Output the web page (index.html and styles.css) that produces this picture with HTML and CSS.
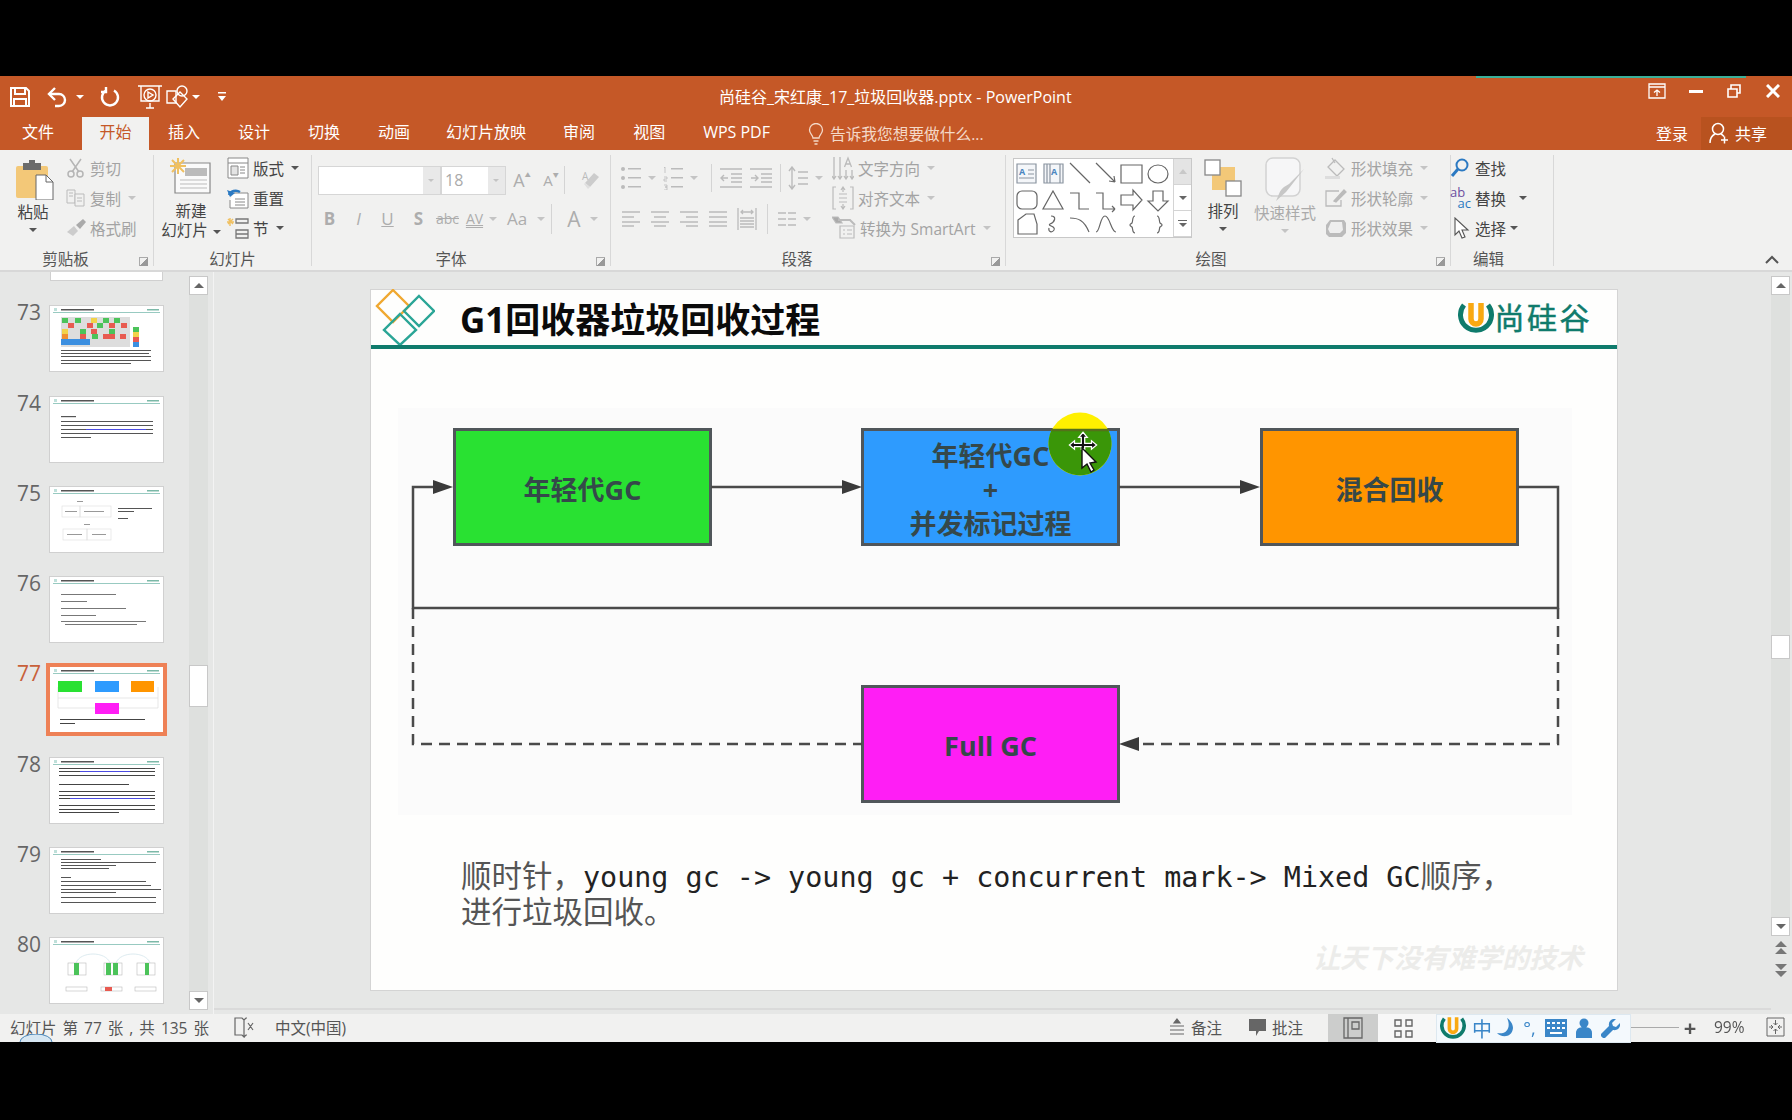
FILE: index.html
```html
<!DOCTYPE html>
<html>
<head>
    <title>尚硅谷_宋红康_17_垃圾回收器.pptx - PowerPoint</title>
    <link rel="stylesheet" href="styles.css">
</head>
<body>
<div class="app">
    <div class="upload-bar"></div>

    <!-- title bar -->
    <div class="titlebar">
        <div class="qat">
            <svg class="q-save" width="22" height="22" viewBox="0 0 22 22" fill="none" stroke="#fff" stroke-width="2"><path d="M2 2h15l3 3v15H2z"/><path d="M6 2v6h10V2M5 20v-7h12v7"/></svg>
            <svg class="q-undo" width="24" height="22" viewBox="0 0 24 22" fill="none" stroke="#fff" stroke-width="2.4"><path d="M3 8h10a6 6 0 0 1 0 12H9"/><path d="M9 2L3 8l6 6"/></svg>
            <span class="caret white"></span>
            <svg class="q-redo" width="22" height="22" viewBox="0 0 22 22" fill="none" stroke="#fff" stroke-width="2.4"><path d="M7 4.500a8 8 0 1 0 8 0"/><path d="M7 1v5H2"/></svg>
            <svg class="q-show" width="26" height="28" viewBox="0 0 26 28" fill="none" stroke="#fff" stroke-width="1.400"><path d="M1 3h24M4 3v15h18V3M9 25h8M13 20v5"/><circle cx="13" cy="12" r="6"/><path d="M11 9l5 3-5 3z"/></svg>
            <svg class="q-shape" width="26" height="26" viewBox="0 0 26 26" fill="none" stroke="#fff" stroke-width="1.400"><path d="M2 7h9v12H2z"/><circle cx="17" cy="7" r="5"/><path d="M15 8l7 7-7 8-7-8z"/></svg>
            <span class="caret white near"></span>
            <svg class="q-more" width="10" height="12" viewBox="0 0 10 12" fill="#fff"><path d="M1 1h8v1.500H1zM1 5h8L5 10z"/></svg>
        </div>
        <div class="doc-title">尚硅谷_宋红康_17_垃圾回收器.pptx - PowerPoint</div>
        <div class="win-btns">
            <span class="win-btn"><svg width="18" height="16" viewBox="0 0 18 16" fill="none" stroke="#fff" stroke-width="1.300"><path d="M1 1h16v14H1zM1 4h16"/><path d="M9 13V7M6 9.500L9 7l3 2.500" /></svg></span>
            <span class="win-btn"><svg width="14" height="4" viewBox="0 0 14 4"><rect width="14" height="3" y="1" fill="#fff"/></svg></span>
            <span class="win-btn"><svg width="14" height="14" viewBox="0 0 14 14" fill="none" stroke="#fff" stroke-width="1.600"><path d="M1 5h9v8H1zM4 5V1h9v8h-3"/></svg></span>
            <span class="win-btn"><svg width="14" height="14" viewBox="0 0 14 14" fill="none" stroke="#fff" stroke-width="3"><path d="M1 1l12 12M13 1L1 13"/></svg></span>
        </div>
    </div>

    <!-- ribbon tabs -->
    <div class="tabs">
        <span class="tab tab-file">文件</span>
        <span class="tab active">开始</span>
        <span class="tab">插入</span>
        <span class="tab">设计</span>
        <span class="tab">切换</span>
        <span class="tab">动画</span>
        <span class="tab tab-show">幻灯片放映</span>
        <span class="tab">审阅</span>
        <span class="tab">视图</span>
        <span class="tab tab-wps">WPS PDF</span>
        <span class="tell-me">
            <svg width="16" height="22" viewBox="0 0 16 22" fill="none" stroke="#f4d9c8" stroke-width="1.300"><path d="M5 15c0-3-3.500-4-3.500-8a6.500 6.500 0 0 1 13 0c0 4-3.500 5-3.500 8zM5.500 18h5M6.500 21h3"/></svg>
            告诉我您想要做什么...
        </span>
        <span class="login">登录</span>
        <span class="share">
            <svg width="20" height="22" viewBox="0 0 20 22" fill="none" stroke="#fff" stroke-width="1.500"><circle cx="9" cy="7" r="5.500"/><path d="M1 21c0-5 3-8 5-9M12 12c1 .5 2 1.200 3 2.500M12 18h7M15.500 14.500v7"/></svg>
            共享
        </span>
    </div>

    <!-- ribbon -->
    <div class="ribbon">
        <div class="group g-clip">
            <div class="group-body">
                <div class="big-btn paste">
                    <svg width="38" height="40" viewBox="0 0 38 40"><rect x="0" y="6" width="32" height="32" rx="2" fill="#F3C878"/><rect x="7" y="3" width="18" height="7" fill="#6b6b6b"/><rect x="13" y="0" width="6" height="5" fill="#6b6b6b"/><path d="M20 15h10l7 7v18H20z" fill="#fff" stroke="#666"/><path d="M30 15v7h7" fill="none" stroke="#666"/></svg>
                    <span class="big-label">粘贴</span>
                    <span class="caret"></span>
                </div>
                <div class="rows">
                    <div class="row dim">
                        <svg class="ico" width="20" height="20" viewBox="0 0 20 20" fill="none" stroke="#b5b5b5" stroke-width="1.500"><circle cx="5" cy="16" r="3"/><circle cx="14" cy="16" r="3"/><path d="M6 14L15 1M13 14L4 1"/></svg>
                        剪切
                    </div>
                    <div class="row dim">
                        <svg class="ico" width="20" height="20" viewBox="0 0 20 20" fill="none" stroke="#bbb"><path d="M1 2h8v13H1zM3 5h4M3 8h4"/><path d="M9 6h9v12H9zM11 10h5M11 13h5" fill="#f1f1f0"/></svg>
                        复制<span class="caret pale spaced"></span>
                    </div>
                    <div class="row dim">
                        <svg class="ico" width="20" height="18" viewBox="0 0 20 18"><path d="M1 13l7-6 4 5-5 5z" fill="#ccc"/><path d="M10 6l7-6 3 3-6 7z" fill="#aaa"/></svg>
                        格式刷
                    </div>
                </div>
            </div>
            <div class="group-label">剪贴板</div>
            <span class="launcher"></span>
        </div>

        <div class="group g-slide">
            <div class="group-body">
                <div class="big-btn new-slide">
                    <svg width="42" height="36" viewBox="0 0 42 36"><path d="M5 5h35v30H5z" fill="#fafafa" stroke="#888" stroke-width="1.200"/><rect x="15" y="10" width="22" height="8" fill="#bbb"/><path d="M10 22h27M10 26h27M10 30h27" stroke="#bbb"/><path d="M8 0v16M0 8h16M2 2l12 12M14 2L2 14" stroke="#F0C060" stroke-width="2"/></svg>
                    <span class="big-label">新建</span>
                    <span class="big-label tight">幻灯片<span class="caret spaced"></span></span>
                </div>
                <div class="rows">
                    <div class="row">
                        <svg class="ico" width="22" height="22" viewBox="0 0 22 22" fill="#fff" stroke="#888"><path d="M1 1h20v20H1z"/><path d="M1 6h20M4 9h7v9H4z" fill="#e4e4e4"/><path d="M13 10h5M13 13h5M13 16h5"/></svg>
                        版式<span class="caret spaced"></span>
                    </div>
                    <div class="row">
                        <svg class="ico" width="22" height="22" viewBox="0 0 22 22" fill="none" stroke="#888"><path d="M7 6h14v15H3v-8" fill="#fff"/><path d="M8 12h10M8 15h10M8 18h10"/><path d="M2 8a7 6 0 0 1 11-3" stroke="#2B79C2" stroke-width="2.400"/><path d="M0 3l3 7 5-4z" fill="#2B79C2" stroke="none"/></svg>
                        重置
                    </div>
                    <div class="row">
                        <svg class="ico" width="22" height="22" viewBox="0 0 22 22" fill="none"><path d="M9 2h12v4H9zM9 13h12v8H9zM9 17h12" stroke="#777" stroke-width="1.300"/><path d="M3 1v8M0 5h7M1 2l5 5M6 2L1 7" stroke="#F0C060" stroke-width="1.400"/></svg>
                        节<span class="caret spaced"></span>
                    </div>
                </div>
            </div>
            <div class="group-label">幻灯片</div>
        </div>

        <div class="group g-font">
            <div class="group-body column">
                <div class="font-row1">
                    <div class="combo name"><span class="combo-arrow"></span></div>
                    <div class="combo size"><span class="combo-val">18</span><span class="combo-arrow"></span></div>
                    <span class="cell w32 glyph">A<sup class="mini">▲</sup></span>
                    <span class="cell w22 glyph small shift-a">A<sup class="mini">▼</sup></span>
                    <span class="vsep"></span>
                    <span class="cell w40 eraser">
                        <svg width="20" height="22" viewBox="0 0 20 22"><path d="M9 18l9-10-5-4-9 10z" fill="#ccc"/><path d="M3 15l4 5 2-2-5-4z" fill="#e0e0e0"/><text x="1" y="11" font-size="10" fill="#bbb" font-family="Open Sans">A</text></svg>
                    </span>
                </div>
                <div class="font-row2">
                    <span class="cell w29 glyph b">B</span>
                    <span class="cell w29 glyph i">I</span>
                    <span class="cell w29 glyph u">U</span>
                    <span class="cell w29 glyph s">S</span>
                    <span class="cell w29 glyph st">abc</span>
                    <span class="cell w29 glyph av">AV</span>
                    <span class="caret pale"></span>
                    <span class="cell w40 glyph aa">Aa</span>
                    <span class="caret pale"></span>
                    <span class="vsep short"></span>
                    <span class="cell w32 glyph big">A</span>
                    <span class="caret pale"></span>
                </div>
            </div>
            <div class="group-label">字体</div>
            <span class="launcher"></span>
        </div>

        <div class="group g-para">
            <div class="group-body">
                <div class="para-left">
                    <div class="para-row1">
                        <span class="cell w40"><svg width="20" height="24" viewBox="0 0 20 24" fill="#bbb"><circle cx="2" cy="3" r="2"/><circle cx="2" cy="12" r="2"/><circle cx="2" cy="21" r="2"/><path d="M7 2h13v1.500H7zM7 11h13v1.500H7zM7 20h13v1.500H7z"/></svg><span class="caret pale spaced"></span></span>
                        <span class="cell w45"><svg width="20" height="24" viewBox="0 0 20 24" fill="#bbb"><path d="M8 2h12v1.500H8zM8 11h12v1.500H8zM8 20h12v1.500H8z"/><path d="M2 1v6M1 2l1-1M1 11h3v2H1v2h3M1 19h3v2H2h2v3H1"  fill="none" stroke="#bbb" stroke-width=".8"/></svg><span class="caret pale spaced"></span></span>
                        <span class="vsep tall first"></span>
                        <span class="cell w30"><svg width="22" height="22" viewBox="0 0 22 22" fill="none" stroke="#bbb" stroke-width="1.400"><path d="M0 2h22M11 7h11M11 11h11M11 15h11M0 20h22M8 11H1M4 8l-3 3 3 3" /></svg></span>
                        <span class="cell w30"><svg width="22" height="22" viewBox="0 0 22 22" fill="none" stroke="#bbb" stroke-width="1.400"><path d="M0 2h22M11 7h11M11 11h11M11 15h11M0 20h22M1 11h7M5 8l3 3-3 3" /></svg></span>
                        <span class="vsep tall"></span>
                        <span class="cell w40"><svg width="20" height="24" viewBox="0 0 20 24" fill="none" stroke="#bbb" stroke-width="1.400"><path d="M4 1v22M1 5l3-4 3 4M1 19l3 4 3-4M10 6h10M10 12h10M10 18h10"/></svg><span class="caret pale spaced"></span></span>
                    </div>
                    <div class="para-row2">
                        <span class="cell w29"><svg width="18" height="16" viewBox="0 0 18 16" stroke="#bbb" stroke-width="1.400"><path d="M0 1h18M0 6h12M0 11h18M0 15h12"/></svg></span>
                        <span class="cell w29"><svg width="18" height="16" viewBox="0 0 18 16" stroke="#bbb" stroke-width="1.400"><path d="M0 1h18M3 6h12M0 11h18M3 15h12"/></svg></span>
                        <span class="cell w29"><svg width="18" height="16" viewBox="0 0 18 16" stroke="#bbb" stroke-width="1.400"><path d="M0 1h18M6 6h12M0 11h18M6 15h12"/></svg></span>
                        <span class="cell w29"><svg width="18" height="16" viewBox="0 0 18 16" stroke="#bbb" stroke-width="1.400"><path d="M0 1h18M0 6h18M0 11h18M0 15h18"/></svg></span>
                        <span class="cell w29"><svg width="20" height="24" viewBox="0 0 20 24" fill="none" stroke="#bbb" stroke-width="1.300"><path d="M1 1v22M19 1v22M4 5h12M6 3L4 5l2 2M14 3l2 2-2 2M3 11h14M3 14h14M3 17h14M3 20h14"/></svg></span>
                        <span class="vsep short"></span>
                        <span class="cell w40"><svg width="18" height="16" viewBox="0 0 18 16" stroke="#bbb" stroke-width="1.400"><path d="M0 2h8M10 2h8M0 8h8M10 8h8M0 14h8M10 14h8"/></svg><span class="caret pale spaced"></span></span>
                    </div>
                </div>
                <div class="rows para-right">
                    <div class="row dim">
                        <svg class="ico" width="22" height="24" viewBox="0 0 22 24" fill="none" stroke="#bbb" stroke-width="1.300"><path d="M2 1v22M8 1v22M0 20l2 3 2-3M6 20l2 3 2-3M14 14v9M12 20l2 3 2-3M20 14v9M18 20l2 3 2-3"/><path d="M12.500 11l3.500-9 3.500 9M14 8h4"/></svg>
                        文字方向<span class="caret pale spaced"></span>
                    </div>
                    <div class="row dim">
                        <svg class="ico" width="22" height="24" viewBox="0 0 22 24" fill="none" stroke="#bbb" stroke-width="1.200"><path d="M4 1H1v22h3M18 1h3v22h-3M7 8h8M7 12h8M7 16h8M11 1v5M9 4l2-3 2 3M11 18v5M9 20l2 3 2-3"/></svg>
                        对齐文本<span class="caret pale spaced"></span>
                    </div>
                    <div class="row dim">
                        <svg class="ico" width="24" height="24" viewBox="0 0 24 24" fill="none" stroke="#bbb" stroke-width="1.200"><path d="M0 1h6l4 6H4z" fill="#aaa"/><path d="M6 4h12l5 5" stroke-width="2"/><path d="M8 10h14v12H8zM11 14h2M15 14h5M11 18h2M15 18h5"/></svg>
                        转换为 SmartArt<span class="caret pale spaced"></span>
                    </div>
                </div>
            </div>
            <div class="group-label">段落</div>
            <span class="launcher"></span>
        </div>

        <div class="group g-draw">
            <div class="group-body">
                <div class="gallery">
                    <svg class="gallery-shapes" width="160" height="80" viewBox="0 0 160 80" fill="none" stroke="#666" stroke-width="1.200">
                        <path d="M4 6h19v19H4zM15 12h6M15 16h6M6 20h15" stroke="#8a94a0" fill="#f4f6f9"/><text x="6" y="17" font-size="9" fill="#4a86c0" stroke="none" font-family="Open Sans" font-weight="700">A</text>
                        <path d="M31 6h19v19H31zM34 6v19M37 6v19M47 6v19" stroke="#8a94a0" fill="#f4f6f9"/><text x="38" y="17" font-size="9" fill="#4a86c0" stroke="none" font-family="Open Sans" font-weight="700">A</text>
                        <path d="M57 5l20 20M83 5l19 19M102 24l-6-1M102 24l-1-6"/>
                        <path d="M108 7h21v18h-21z"/><ellipse cx="145" cy="16" rx="10" ry="9"/>
                        <rect x="4" y="33" width="20" height="18" rx="5"/><path d="M40 33l10 18H30zM57 35h9v16h10M83 35h7v16h12M102 51l-3-3M102 51l-3 3M108 37h12v-5l9 10-9 10v-5h-12zM140 33h10v10h5l-10 10-10-10h5z"/>
                        <path d="M5 62l8-6h8l3 10v10H5zM38 58c6 0 4 6-1 8-3 2 6 2 4 6-2 3-6 2-5-2M57 60c8 0 14 2 19 14M83 74c4 0 4-16 9-16s6 16 11 16"/>
                        <path d="M122 58c-3 0-2 6-3 7-1 1-2 1-2 2s1 1 2 2c1 1 0 6 3 6M144 58c3 0 2 6 3 7 1 1 2 1 2 2s-1 1-2 2c-1 1 0 6-3 6"/>
                    </svg>
                    <div class="gallery-scroll">
                        <span class="g-up"><i class="tri up pale"></i></span>
                        <span class="g-mid"><i class="tri"></i></span>
                        <span class="g-more"><i class="bar"></i><i class="tri"></i></span>
                    </div>
                </div>
                <div class="big-btn arrange">
                    <svg width="38" height="38" viewBox="0 0 38 38"><rect x="8" y="8" width="23" height="23" fill="#F3C878"/><rect x="1" y="1" width="15" height="15" fill="#fff" stroke="#888" stroke-width="1.300"/><rect x="22" y="22" width="15" height="15" fill="#fff" stroke="#888" stroke-width="1.300"/></svg>
                    <span class="big-label">排列</span>
                    <span class="caret"></span>
                </div>
                <div class="big-btn quick dim">
                    <svg width="40" height="46" viewBox="0 0 40 46"><rect x="1" y="1" width="34" height="38" rx="7" fill="#f6f6f7" stroke="#d2d2d2" stroke-width="1.500"/><path d="M39 12L25 30l-4 5-10 9c3-6 3-10 8-14l5-3z" fill="#c7c7c7"/></svg>
                    <span class="big-label quick-label">快速样式</span>
                    <span class="caret pale"></span>
                </div>
                <div class="rows shape-rows">
                    <div class="row dim">
                        <svg class="ico" width="22" height="22" viewBox="0 0 22 22" fill="none" stroke="#bbb" stroke-width="1.300"><path d="M10 3l9 9-7 7-9-9zM7 1l3 5"/><path d="M0 19h15v3H0z" fill="#ddd" stroke="none"/></svg>
                        形状填充<span class="caret pale spaced"></span>
                    </div>
                    <div class="row dim">
                        <svg class="ico" width="22" height="20" viewBox="0 0 22 20" fill="none" stroke="#bbb" stroke-width="1.300"><path d="M14 3H1v15h15v-6"/><path d="M9 13l10-11 2 2-10 10z" fill="#bbb"/></svg>
                        形状轮廓<span class="caret pale spaced"></span>
                    </div>
                    <div class="row dim">
                        <svg class="ico" width="22" height="20" viewBox="0 0 22 20"><path d="M5 2h14l2 3v10l-4 4H4l-3-3V7z" fill="#bbb"/><path d="M6 4h11l1 8-3 3H5l-2-4z" fill="#eee"/></svg>
                        形状效果<span class="caret pale spaced"></span>
                    </div>
                </div>
            </div>
            <div class="group-label">绘图</div>
            <span class="launcher"></span>
        </div>

        <div class="group g-edit">
            <div class="group-body">
                <div class="rows">
                    <div class="row">
                        <svg class="ico" width="20" height="20" viewBox="0 0 20 20" fill="none" stroke="#2B79C2"><circle cx="12" cy="7" r="5.500" stroke-width="2"/><path d="M8 11l-6 7" stroke-width="3"/></svg>
                        查找
                    </div>
                    <div class="row">
                        <span class="ab-ac"><b>ab</b><b class="ac">ac</b></span>
                        替换<span class="caret spaced wide"></span>
                    </div>
                    <div class="row">
                        <svg class="ico" width="20" height="22" viewBox="0 0 20 22" fill="#fff" stroke="#555" stroke-width="1.100"><path d="M5 1v17l4-4 3 7 3-1-3-7h6z"/></svg>
                        选择<span class="caret spaced close"></span>
                    </div>
                </div>
            </div>
            <div class="group-label">编辑</div>
        </div>

        <svg class="collapse" width="14" height="9" viewBox="0 0 14 9" fill="none" stroke="#555" stroke-width="2"><path d="M1 8l6-6 6 6"/></svg>
    </div>

    <!-- main area -->
    <div class="main">
        <div class="thumb-pane">
            <div class="thumb-list">
                <div class="thumb-stub"></div>

                <div class="thumb-row">
                    <span class="num">73</span>
                    <svg class="thumb" viewBox="0 0 113 65">
                        <use href="#thumbHead"/>
                        <rect x="11" y="11" width="69" height="30" fill="#ddd"/>
                        <g fill="#4CC35A"><rect x="12" y="12" width="6" height="5"/><rect x="25" y="12" width="6" height="5"/><rect x="53" y="12" width="6" height="5"/><rect x="64" y="12" width="6" height="5"/><rect x="47" y="17" width="6" height="5"/><rect x="30" y="23" width="6" height="5"/><rect x="59" y="23" width="6" height="5"/><rect x="42" y="28" width="6" height="5"/></g>
                        <g fill="#E85A50"><rect x="18" y="17" width="6" height="5"/><rect x="37" y="17" width="6" height="5"/><rect x="59" y="17" width="6" height="5"/><rect x="71" y="17" width="6" height="5"/><rect x="41" y="23" width="6" height="5"/><rect x="30" y="28" width="6" height="5"/><rect x="53" y="28" width="12" height="5"/><rect x="70" y="28" width="6" height="5"/></g>
                        <g fill="#F2D34A"><rect x="12" y="23" width="6" height="5"/><rect x="41" y="12" width="6" height="5"/></g>
                        <rect x="12" y="28" width="6" height="5" fill="#F09030"/>
                        <rect x="11" y="33" width="29" height="6" fill="#3C8FE0"/>
                        <rect x="83" y="21" width="6" height="5" fill="#4CC35A"/><rect x="83" y="26" width="6" height="5" fill="#F2D34A"/><rect x="83" y="31" width="6" height="5" fill="#E85A50"/><rect x="83" y="36" width="6" height="5" fill="#3C8FE0"/>
                        <g fill="#555"><rect x="11" y="44" width="90" height="1"/><rect x="11" y="47" width="88" height="1"/><rect x="11" y="50" width="90" height="1"/><rect x="11" y="54" width="90" height="1"/><rect x="11" y="57" width="70" height="1"/></g>
                    </svg>
                </div>

                <div class="thumb-row">
                    <span class="num">74</span>
                    <svg class="thumb" viewBox="0 0 113 65">
                        <use href="#thumbHead"/>
                        <g fill="#555"><rect x="11" y="19" width="15" height="1.200"/><rect x="11" y="24" width="92" height="1"/><rect x="11" y="28" width="92" height="1"/><rect x="11" y="32" width="92" height="1"/><rect x="11" y="36" width="92" height="1"/><rect x="11" y="40" width="30" height="1"/></g>
                        <rect x="36" y="32" width="60" height="1" fill="#4a4ae0"/>
                    </svg>
                </div>

                <div class="thumb-row">
                    <span class="num">75</span>
                    <svg class="thumb" viewBox="0 0 113 65">
                        <use href="#thumbHead"/>
                        <g fill="none" stroke="#ddd" stroke-width=".6"><rect x="12" y="19" width="18" height="11"/><rect x="30" y="19" width="31" height="11"/><rect x="13" y="42" width="24" height="11"/><rect x="37" y="42" width="24" height="11"/></g>
                        <g fill="#999"><rect x="15" y="24" width="12" height="1"/><rect x="34" y="24" width="20" height="1"/><rect x="17" y="47" width="15" height="1"/><rect x="42" y="47" width="14" height="1"/><rect x="27" y="14" width="6" height="1"/><rect x="34" y="37" width="6" height="1"/></g>
                        <g fill="#555"><rect x="68" y="21" width="34" height="1"/><rect x="68" y="24" width="16" height="1"/><rect x="68" y="31" width="10" height="1"/></g>
                    </svg>
                </div>

                <div class="thumb-row">
                    <span class="num">76</span>
                    <svg class="thumb" viewBox="0 0 113 65">
                        <use href="#thumbHead"/>
                        <g fill="#777"><rect x="11" y="17" width="55" height="1"/><rect x="11" y="24" width="26" height="1"/><rect x="11" y="31" width="65" height="1"/><rect x="11" y="38" width="35" height="1"/><rect x="11" y="44" width="85" height="1"/><rect x="15" y="47" width="72" height="1"/></g>
                    </svg>
                </div>

                <div class="thumb-row">
                    <span class="num current">77</span>
                    <svg class="thumb selected" viewBox="0 0 113 65">
                        <use href="#thumbHead"/>
                        <g fill="none" stroke="#ddd" stroke-width=".7"><path d="M8 20v21h100V20M8 31h100"/></g>
                        <rect x="8" y="14" width="24" height="11" fill="#29E132"/>
                        <rect x="45" y="14" width="24" height="11" fill="#2E9BFE"/>
                        <rect x="81" y="14" width="23" height="11" fill="#FF9500"/>
                        <rect x="45" y="36" width="24" height="11" fill="#FF1EF5"/>
                        <g fill="#444"><rect x="10" y="52" width="85" height="1"/><rect x="10" y="56" width="15" height="1"/></g>
                    </svg>
                </div>

                <div class="thumb-row">
                    <span class="num">78</span>
                    <svg class="thumb" viewBox="0 0 113 65">
                        <use href="#thumbHead"/>
                        <g fill="#444"><rect x="9" y="10" width="96" height="1"/><rect x="9" y="13" width="96" height="1"/><rect x="9" y="17" width="96" height="1"/><rect x="9" y="26" width="70" height="1"/><rect x="9" y="33" width="96" height="1"/><rect x="9" y="37" width="96" height="1"/><rect x="9" y="40" width="96" height="1"/><rect x="9" y="47" width="96" height="1"/><rect x="9" y="51" width="96" height="1"/><rect x="9" y="54" width="60" height="1"/></g>
                        <g fill="#4a4ae0"><rect x="30" y="13" width="50" height="1"/><rect x="20" y="40" width="80" height="1"/></g>
                    </svg>
                </div>

                <div class="thumb-row">
                    <span class="num">79</span>
                    <svg class="thumb" viewBox="0 0 113 65">
                        <use href="#thumbHead"/>
                        <g fill="#555"><rect x="11" y="11" width="40" height="1"/><rect x="11" y="14" width="95" height="1"/><rect x="11" y="17" width="55" height="1"/><rect x="11" y="20" width="48" height="1"/><rect x="11" y="29" width="10" height="1"/><rect x="11" y="33" width="85" height="1"/><rect x="11" y="37" width="90" height="1"/><rect x="11" y="41" width="100" height="1"/><rect x="11" y="44" width="55" height="1"/><rect x="11" y="49" width="95" height="1"/><rect x="11" y="54" width="95" height="1"/></g>
                    </svg>
                </div>

                <div class="thumb-row">
                    <span class="num">80</span>
                    <svg class="thumb" viewBox="0 0 113 65">
                        <use href="#thumbHead"/>
                        <g fill="none" stroke="#cfe3ea" stroke-width=".7"><path d="M26 25c4-12 30-12 34 0M66 25c4-12 30-12 34 0"/></g>
                        <g fill="none" stroke="#bbb" stroke-width=".6"><rect x="18" y="25" width="18" height="12"/><rect x="54" y="25" width="18" height="12"/><rect x="87" y="25" width="18" height="12"/><rect x="16" y="49" width="21" height="4"/><rect x="51" y="49" width="21" height="4"/><rect x="85" y="49" width="21" height="4"/></g>
                        <g fill="#4CC35A"><rect x="24" y="25" width="5" height="12"/><rect x="56" y="25" width="5" height="12"/><rect x="63" y="25" width="5" height="12"/><rect x="95" y="25" width="4" height="12"/></g>
                        <rect x="55" y="49" width="7" height="4" fill="#E85A50"/>
                    </svg>
                </div>
            </div>
            <div class="vscroll">
                <span class="sb-btn"><i class="tri up"></i></span>
                <span class="sb-thumb left-thumb"></span>
                <span class="sb-btn bottom"><i class="tri"></i></span>
            </div>
        </div>

        <div class="stage">
            <div class="slide">
                <div class="slide-head">
                    <svg class="slide-mark" width="60" height="56" viewBox="0 0 60 56" fill="none" stroke-width="2.400">
                        <path d="M18 1l16 16-16 16L2 17z" stroke="#F0A830"/>
                        <path d="M44 7l15 15-15 15-15-15z" stroke="#2AA596"/>
                        <path d="M25 25l16 16-16 15L9 41z" stroke="#2AA596"/>
                    </svg>
                    <div class="slide-title">G1回收器垃圾回收过程</div>
                    <div class="brand">
                        <svg width="36" height="36" viewBox="0 0 36 36" fill="none"><path d="M6 5A15.500 15.500 0 1 0 30 5" stroke="#0F7B6C" stroke-width="5"/><path d="M13 3v16a5 5 0 0 0 10 0V3" stroke="#F9A912" stroke-width="5.500"/></svg>
                        <span class="brand-name">尚硅谷</span>
                    </div>
                </div>

                <div class="diagram">
                    <div class="node green n1">年轻代GC</div>
                    <div class="node blue n2"><span>年轻代GC</span><span>+</span><span>并发标记过程</span></div>
                    <div class="node orange n3">混合回收</div>
                    <div class="node magenta n4">Full GC</div>
                    <svg class="wires" width="1174" height="407" viewBox="0 0 1174 407" fill="none" stroke="#4a4a4a" stroke-width="2.500">
                        <path d="M313 79H446M721 79H845M1120 79H1160V200H15V79H37"/>
                        <path d="M15 200V336H464M1160 200V336H741" stroke-dasharray="11 7"/>
                        <g fill="#3a3a3a" stroke="none">
                            <path d="M55 79l-20-7v14z"/>
                            <path d="M464 79l-20-7v14z"/>
                            <path d="M862 79l-20-7v14z"/>
                            <path d="M721 336l20-7v14z"/>
                        </g>
                    </svg>
                    <svg class="pointer" width="80" height="80" viewBox="0 0 80 80">
                        <circle cx="40" cy="40" r="31.500" fill="#FFF000"/>
                        <path d="M11.600 26a31.500 31.500 0 1 0 56.800 0z" fill="#3A9608"/>
                        <path d="M11.600 26h56.800" stroke="#55701a" stroke-width="2.500"/>
                        <g transform="translate(7.300 7) scale(.85)">
                            <path d="M42 25l5 6h-3v7h8v-3l6 5-6 5v-3h-8v3h-4v-3h-8v3l-6-5 6-5v3h8v-7h-3z" fill="#111" stroke="#fff" stroke-width="1.500"/>
                        </g>
                        <path d="M42 44v20l5-4 4 8 3-2-4-7 6-1z" fill="#fff" stroke="#111" stroke-width="1.400"/>
                    </svg>
                </div>

                <p class="caption">
                    <span class="cjk">顺时针，</span>young gc -&gt; young gc + concurrent mark-&gt; Mixed GC<span class="cjk">顺序，</span><br>
                    <span class="cjk">进行垃圾回收。</span>
                </p>
                <div class="watermark">让天下没有难学的技术</div>
            </div>
        </div>

        <div class="vscroll-right">
            <div class="vscroll right-track">
                <span class="sb-btn"><i class="tri up"></i></span>
                <span class="sb-thumb right-thumb"></span>
                <span class="sb-btn bottom"><i class="tri"></i></span>
            </div>
            <svg class="page-jump" width="14" height="14" viewBox="0 0 14 14" fill="#777"><path d="M7 0l6 6H1zM7 7l6 6H1z"/></svg>
            <svg class="page-jump" width="14" height="14" viewBox="0 0 14 14" fill="#777"><path d="M1 1h12L7 7zM1 8h12l-6 6z"/></svg>
        </div>
    </div>

    <!-- status bar -->
    <div class="statusbar">
        <span class="st-count">幻灯片 第 77 张 , 共 135 张</span>
        <svg class="st-spell" width="20" height="22" viewBox="0 0 20 22" fill="none" stroke="#666" stroke-width="1.200"><path d="M1 2h7l2 2v17l-2-2H1zM10 4l2-2h1M10 21l2-2h1M14 7l5 7M19 7l-5 7"/></svg>
        <span class="st-lang">中文(中国)</span>
        <svg class="st-arc" width="34" height="8" viewBox="0 0 34 8" fill="#d6e6f2" stroke="#4a86b8"><path d="M1 8a16 8 0 0 1 32 0"/></svg>

        <svg class="st-note" width="16" height="18" viewBox="0 0 16 18" stroke="#666" stroke-width="1.200" fill="#666"><path d="M8 1l3 4H5z"/><path d="M1 8h14M1 12h14M1 16h14" fill="none"/></svg>
        <span class="st-text">备注</span>
        <svg class="st-comment" width="17" height="19" viewBox="0 0 17 19" fill="#666"><path d="M0 1h17v12H10l-3 5v-5H0z"/></svg>
        <span class="st-text">批注</span>
        <span class="view-normal">
            <svg width="20" height="22" viewBox="0 0 20 22" fill="none" stroke="#666" stroke-width="1.300"><path d="M1 1h18v20H1zM5 1v20M9 5h7v7H9z"/></svg>
        </span>
        <span class="view-sort">
            <svg width="19" height="19" viewBox="0 0 19 19" fill="none" stroke="#666" stroke-width="1.400"><path d="M1 1h6v6H1zM12 1h6v6h-6zM1 12h6v6H1zM12 12h6v6h-6z"/></svg>
        </span>

        <div class="ime">
            <svg width="26" height="26" viewBox="0 0 36 36" fill="none"><path d="M6 5A15.500 15.500 0 1 0 30 5" stroke="#0F7B6C" stroke-width="5"/><path d="M13 3v16a5 5 0 0 0 10 0V3" stroke="#F9A912" stroke-width="5"/></svg>
            <span class="ime-zh">中</span>
            <svg class="ime-moon" width="18" height="20" viewBox="0 0 18 20" fill="#3A86C8"><path d="M11 0c4 8 1 17-10 15 3 4 15 6 16-5 0-4-3-8-6-10z"/></svg>
            <span class="ime-punc">°,</span>
            <svg width="22" height="18" viewBox="0 0 22 18"><rect width="22" height="18" fill="#3A86C8"/><g fill="#fff"><rect x="2" y="3" width="3" height="2"/><rect x="7" y="3" width="3" height="2"/><rect x="12" y="3" width="3" height="2"/><rect x="17" y="3" width="3" height="2"/><rect x="2" y="8" width="3" height="2"/><rect x="7" y="8" width="3" height="2"/><rect x="12" y="8" width="3" height="2"/><rect x="17" y="8" width="3" height="2"/><rect x="5" y="13" width="12" height="2"/></g></svg>
            <svg width="16" height="20" viewBox="0 0 16 20" fill="#3A86C8"><circle cx="8" cy="5" r="4.500"/><path d="M0 20v-5c0-4 3-6 8-6s8 2 8 6v5z"/></svg>
            <svg width="19" height="19" viewBox="0 0 19 19" fill="#3A86C8"><path d="M19 4l-4 4-3-1-1-3 4-4c-4-1-8 2-7 7L0 15c-1 2 2 5 4 4l8-8c5 1 8-3 7-7z"/></svg>
        </div>
        <span class="zoom-line"></span>
        <span class="zoom-plus">+</span>
        <span class="zoom-val">99%</span>
        <svg class="st-fit" width="19" height="20" viewBox="0 0 19 20" fill="none" stroke="#666"><path d="M1 1h17v18H1z"/><path d="M9.500 3v5M7.500 6l2 2 2-2M9.500 17v-5M7.500 14l2-2 2 2M3 10h4M5 8l2 2-2 2M16 10h-4M14 8l-2 2 2 2"/></svg>
    </div>
</div>

<!-- shared slide header for the thumbnails -->
<svg class="defs" width="0" height="0">
    <symbol id="thumbHead" viewBox="0 0 113 65">
        <rect x="11" y="3" width="33" height="1.500" fill="#555"/>
        <rect x="97" y="3" width="12" height="1.500" fill="#7CB9A8"/>
        <rect x="3" y="6" width="107" height=".8" fill="#7FBDB2"/>
        <rect x="4" y="2" width="3" height="3" fill="#BFE0DA"/>
    </symbol>
</svg>
</body>
</html>
```

FILE: styles.css
```css
* { box-sizing: border-box; }

html, body {
    margin: 0;
    height: 1120px;
    background: #000;
    overflow: hidden;
}

body {
    font-family: "Open Sans", "Noto Sans CJK SC", sans-serif;
    font-size: 15.5px;
    color: #444;
}

.defs { position: absolute; }

.app {
    position: relative;
    margin-top: 76px;
    height: 966px;
    width: 1792px;
    display: flex;
    flex-direction: column;
    background: #E6E7E6;
    filter: blur(0.45px);
}

.upload-bar {
    position: absolute;
    top: 0;
    left: 1476px;
    width: 270px;
    height: 2px;
    background: #3AB09A;
}

/* title bar */
.titlebar {
    height: 41px;
    background: #C55827;
    display: flex;
    align-items: center;
    color: #fff;
}

.qat {
    width: 719px;
    display: flex;
    align-items: center;
    padding-left: 9px;
}

.q-undo { margin-left: 15px; }
.q-redo { margin-left: 15px; }
.q-show { margin-left: 16px; }
.q-shape { margin-left: 2px; }
.q-more { margin-left: 17px; }
.qat .caret { margin-left: 6px; }
.qat .caret.near { margin-left: 1px; }

.doc-title {
    font-size: 16px;
    line-height: 20px;
    white-space: nowrap;
}

.win-btns {
    margin-left: auto;
    display: flex;
    width: 154px;
}

.win-btn {
    flex: 1;
    display: flex;
    align-items: center;
    justify-content: center;
    margin-top: -12px;
}

/* tabs */
.tabs {
    height: 33px;
    background: #C55827;
    display: flex;
    align-items: center;
    color: #fff;
    font-size: 16px;
}

.tab {
    height: 33px;
    line-height: 31px;
    padding: 0 19px;
    white-space: nowrap;
}

.tab-file { padding: 0 28px 0 22px; }
.tab-show { padding: 0 18px 0 17px; }
.tab-wps { padding: 0 19px 0 19px; }

.tab.active {
    padding: 0 17.500px;
    background: #F1F1F0;
    color: #C55827;
}

.tell-me {
    display: flex;
    align-items: center;
    gap: 6px;
    margin-left: 19px;
    font-size: 15.700px;
    color: #F4D9C8;
}

.login { margin: 0 13px 2px auto; }

.share {
    width: 91px;
    height: 33px;
    background: #B8521F;
    display: flex;
    align-items: center;
    gap: 6px;
    padding: 0 0 2px 8px;
}

/* ribbon */
.ribbon {
    position: relative;
    height: 122px;
    padding-top: 5px;
    display: flex;
    background: #F1F1F0;
    border-bottom: 2px solid #D8D8D8;
    align-items: flex-start;
}

.group {
    position: relative;
    height: 111px;
    display: flex;
    flex-direction: column;
    border-right: 1px solid #D8D8D8;
    flex: none;
}

.g-clip { width: 154px; }
.g-slide { width: 158px; }
.g-font { width: 299px; }
.g-para { width: 395px; }
.g-draw { width: 445px; }
.g-edit { width: 103px; }

.group-body {
    display: flex;
    height: 90px;
}

.group-body.column { flex-direction: column; }

.group-label {
    margin-top: auto;
    margin-bottom: -3px;
    height: 20px;
    line-height: 20px;
    text-align: center;
    color: #555;
}

.g-clip .group-label { padding-right: 22px; }
.g-font .group-label { padding-right: 20px; }
.g-para .group-label { padding-right: 22px; }
.g-draw .group-label { padding-right: 34px; }
.g-edit .group-label { padding-right: 27px; }

.launcher {
    position: absolute;
    right: 5px;
    bottom: 0;
    width: 9px;
    height: 9px;
    border: 1px solid #aaa;
    border-width: 1px 0 0 1px;
    background: linear-gradient(135deg, transparent 50%, #999 50%);
}

.big-btn {
    display: flex;
    flex-direction: column;
    align-items: center;
    white-space: nowrap;
    flex: none;
}

.big-label { line-height: 20px; margin-top: 2px; color: #444; }
.big-label.tight { margin-top: -1px; }
.big-btn .caret { margin-top: 6px; }

.paste { width: 66px; padding-top: 5px; }
.paste svg { margin-left: 4px; }
.new-slide { width: 72px; margin-left: 1px; padding-top: 3px; }
.new-slide .big-label:first-of-type { margin-top: 7px; }
.new-slide .caret.spaced { margin: 0 0 0 5px; vertical-align: middle; }
.arrange { width: 62px; padding-top: 4px; }
.arrange .big-label { margin-top: 4px; }
.quick { width: 62px; padding-top: 2px; }
.quick .big-label { color: #aaa; margin-top: 0; font-size: 15.500px; }

.rows {
    display: grid;
    grid-auto-rows: 26px;
    row-gap: 4px;
    align-content: start;
    white-space: nowrap;
}

.row {
    display: flex;
    align-items: center;
    color: #444;
}

.row.dim { color: #A3A3A3; }
.ico { flex: none; margin-right: 4px; }

.caret {
    display: inline-block;
    flex: none;
    width: 0;
    height: 0;
    border: 4px solid transparent;
    border-top-color: #555;
    border-bottom-width: 0;
}

.caret.white { border-top-color: #fff; }
.caret.pale { border-top-color: #C4C4C4; }
.caret.spaced { margin-left: 7px; }
.caret.wide { margin-left: 13px; }
.caret.close { margin-left: 4px; }

.cell {
    display: inline-flex;
    align-items: center;
    justify-content: center;
    flex: none;
}

.w22 { width: 22px; }
.w29 { width: 29px; }
.w30 { width: 30px; }
.w32 { width: 32px; }
.w40 { width: 40px; }
.w45 { width: 45px; }

.vsep {
    width: 1px;
    height: 28px;
    background: #D4D4D4;
    flex: none;
    margin: 0 2px;
}

.vsep.short { height: 30px; margin: 0 6px; }
.vsep.tall { height: 28px; margin: 0 4px; }
.vsep.tall.first { margin-left: 8px; }

/* font group */
.font-row1 {
    display: flex;
    align-items: center;
    margin: 10px 0 0 6px;
    height: 30px;
}

.combo {
    height: 29px;
    background: #fff;
    border: 1px solid #D6D6D6;
    display: flex;
    justify-content: flex-end;
    align-items: center;
    flex: none;
}

.combo.name { width: 123px; }
.combo.size { width: 65px; margin-right: 0; }

.combo-val {
    margin-right: auto;
    padding-left: 3px;
    color: #AAA;
    font-size: 16px;
}

.combo-arrow {
    width: 17px;
    height: 27px;
    background: #E9E9E9;
    position: relative;
}

.combo-arrow::after {
    content: "";
    position: absolute;
    top: 12px;
    left: 5px;
    border: 3.500px solid transparent;
    border-top-color: #C4C4C4;
    border-bottom-width: 0;
}

.font-row2 {
    display: flex;
    align-items: center;
    margin: 9px 0 0 3px;
    height: 30px;
}

.glyph { color: #ADADAD; font-size: 18px; line-height: 24px; }
.glyph.small { font-size: 15px; }
.shift-a { margin-left: 2px; }
.eraser { margin-left: 4px; }
.glyph.b { font-weight: 700; font-size: 17px; }
.glyph.i { font-style: italic; font-size: 17px; }
.glyph.u { text-decoration: underline; font-size: 17px; }
.glyph.s { font-weight: 700; font-size: 17px; margin-left: 2px; }
.glyph.st { font-size: 14px; text-decoration: line-through; }
.glyph.av { font-size: 14px; text-decoration: underline double; margin-left: -2px; }
.glyph.aa { font-size: 17px; }
.glyph.big { font-size: 21px; }
.mini { font-size: 6px; line-height: 6px; align-self: flex-start; margin-top: 4px; }

/* paragraph group */
.para-left { width: 218px; flex: none; }

.para-row1 {
    display: flex;
    align-items: center;
    height: 30px;
    margin-top: 8px;
    padding-left: 7px;
}

.para-row2 {
    display: flex;
    align-items: center;
    height: 30px;
    margin-top: 11px;
    padding-left: 5px;
}

.para-right { padding-left: 3px; }

/* drawing group */
.gallery {
    margin: 3px 0 0 7px;
    width: 179px;
    height: 80px;
    display: flex;
    border: 1px solid #C8C8C8;
    background: #fff;
    flex: none;
}

.gallery-shapes { flex: none; margin: -1px 0 0 -1px; }

.gallery-scroll {
    margin-left: auto;
    width: 19px;
    display: flex;
    flex-direction: column;
    border-left: 1px solid #D4D4D4;
}

.gallery-scroll span {
    flex: 1;
    display: flex;
    flex-direction: column;
    gap: 2px;
    align-items: center;
    justify-content: center;
    border-bottom: 1px solid #D4D4D4;
}

.g-up { background: #E4E4E4; }

.tri {
    display: block;
    width: 0;
    height: 0;
    border: 5px solid transparent;
    border-top-color: #666;
    border-bottom-width: 0;
}

.gallery-scroll .tri { border-width: 4px 4px 0; }

.tri.up {
    border-top-width: 0;
    border-bottom: 5px solid #666;
    border-top-color: transparent;
}

.tri.up.pale { border-bottom-color: #C8C8C8; }
.bar { display: block; width: 9px; height: 1.500px; background: #666; }
.shape-rows { margin-left: 9px; }

/* editing group */
.g-edit .rows { margin-left: -1px; }
.g-edit .row .ico { margin-right: 5px; }

.ab-ac {
    width: 21px;
    margin-right: 4px;
    display: flex;
    flex-direction: column;
    font-size: 13px;
    line-height: 11px;
    color: #6C4FA0;
}

.ab-ac b { font-weight: 400; }
.ab-ac .ac { color: #2B79C2; text-align: right; }

.collapse { position: absolute; right: 13px; bottom: 6px; }

/* main area */
.main {
    height: 742px;
    display: flex;
}

.thumb-pane {
    width: 214px;
    flex: none;
    display: flex;
    border-right: 1px solid #F3F3F3;
    overflow: hidden;
}

.thumb-list {
    width: 189px;
    flex: none;
    display: flex;
    flex-direction: column;
    gap: 25.300px;
}

.thumb-stub {
    margin-left: 50px;
    width: 113px;
    height: 9px;
    background: #fff;
    border: 1px solid #D0D0D0;
    border-top: 0;
}

.thumb-row {
    display: flex;
    align-items: flex-start;
    gap: 9px;
    height: 65px;
}

.num {
    width: 41px;
    text-align: right;
    font-size: 21px;
    line-height: 24px;
    margin-top: -6px;
    color: #666;
}

.num.current { color: #C8603A; }

.thumb {
    width: 113px;
    height: 65px;
    flex: none;
    background: #fff;
    box-shadow: 0 0 0 1px #D0D0D0;
    filter: blur(0.7px);
}

.thumb.selected { box-shadow: 0 0 0 4px #EE8156; }

.vscroll {
    width: 19px;
    height: 734px;
    margin-top: 4px;
    background: #DEE0DE;
    display: flex;
    flex-direction: column;
    flex: none;
}

.sb-btn {
    width: 19px;
    height: 19px;
    flex: none;
    background: #fff;
    border: 1px solid #C8C8C8;
    display: flex;
    align-items: center;
    justify-content: center;
}

.sb-btn.bottom { margin-top: auto; }

.sb-thumb {
    width: 19px;
    flex: none;
    background: #fff;
    border: 1px solid #C8C8C8;
}

.left-thumb { height: 42px; margin-top: 370px; }
.right-thumb { height: 24px; margin-top: 340px; }

.stage {
    flex: 1;
    height: 738px;
    padding: 17px 0 0 156px;
    border-bottom: 2px solid #DADADA;
}

/* slide */
.slide {
    position: relative;
    width: 1248px;
    height: 702px;
    background: #FEFEFD;
    border: 1px solid #D4D4D4;
}

.slide-head {
    height: 59px;
    display: flex;
    align-items: flex-start;
    border-bottom: 4px solid #0F7B6C;
    padding-left: 4px;
}

.slide-mark { flex: none; margin-top: -1px; }

.slide-title {
    margin-left: 25px;
    font-size: 35px;
    font-weight: 700;
    line-height: 60px;
    color: #0b0b0b;
    white-space: nowrap;
}

.brand {
    margin: 10px 25px 0 auto;
    display: flex;
    align-items: center;
    gap: 1px;
}

.brand-name {
    font-size: 30px;
    line-height: 36px;
    color: #0F7B6C;
    font-weight: 400;
    letter-spacing: 2.500px;
    -webkit-text-stroke: 0.5px #0F7B6C;
}

.diagram {
    position: relative;
    margin: 59px 0 0 27px;
    width: 1174px;
    height: 407px;
    background: #FBFBFB;
}

.node {
    position: absolute;
    width: 259px;
    height: 118px;
    padding-top: 5px;
    border: 3px solid #50565A;
    display: flex;
    flex-direction: column;
    align-items: center;
    justify-content: center;
    font-size: 27px;
    font-weight: 700;
    line-height: 34px;
    color: #35484A;
}

.green { background: #29E132; }
.blue { background: #2E9BFE; }
.orange { background: #FF9500; }
.magenta { background: #FF1EF5; padding-top: 3px; }

.n1 { left: 55px; top: 20px; }
.n2 { left: 463px; top: 20px; }
.n3 { left: 862px; top: 20px; }
.n4 { left: 463px; top: 277px; }

.wires, .pointer {
    position: absolute;
    top: 0;
    left: 0;
}

.pointer { left: 642px; top: -4px; }

.caption {
    margin: 44px 0 0 90px;
    font-family: "DejaVu Sans Mono", "Noto Sans CJK SC", monospace;
    font-size: 28.400px;
    line-height: 34px;
    color: #222;
    white-space: nowrap;
}

.cjk {
    font-family: "Noto Sans CJK SC", sans-serif;
    font-size: 30.500px;
    line-height: 1;
    color: #555;
    font-weight: 400;
}

.watermark {
    position: absolute;
    left: 942px;
    top: 648px;
    font-size: 27px;
    font-style: italic;
    font-weight: 700;
    line-height: 40px;
    color: #ECECEA;
    white-space: nowrap;
}

.vscroll-right {
    margin-left: auto;
    margin-right: 2px;
    width: 19px;
    display: flex;
    flex-direction: column;
    align-items: center;
    flex: none;
}

.right-track { height: 660px; }
.page-jump { margin-top: 8px; flex: none; }
.page-jump:nth-of-type(1) { margin-top: 5px; }

/* status bar */
.statusbar {
    position: relative;
    height: 28px;
    background: #F1F1F0;
    display: flex;
    align-items: center;
    white-space: nowrap;
    color: #555;
    font-size: 15.5px;
    padding-bottom: 2px;
}

.st-count { margin-left: 10px; width: 197px; word-spacing: 2px; }
.st-spell { margin-left: 27px; }
.st-lang { margin-left: 21px; }
.st-arc { position: absolute; left: 19px; bottom: 0; }
.st-note { margin-left: auto; }
.st-text { margin-left: 6px; }
.st-comment { margin-left: 27px; }

.view-normal {
    margin: 0 0 -2px 25px;
    width: 50px;
    height: 28px;
    background: #CCCDCC;
    display: flex;
    align-items: center;
    justify-content: center;
}

.view-sort {
    width: 58px;
    height: 28px;
    margin-bottom: -2px;
    padding-right: 7px;
    background: #F7F7F7;
    display: flex;
    align-items: center;
    justify-content: center;
}

.ime {
    width: 195px;
    height: 29px;
    margin-bottom: -2px;
    background: #F4F9FD;
    border: 1px solid #DDE8F0;
    display: flex;
    align-items: center;
    justify-content: space-between;
    padding: 0 10px 0 3px;
    color: #3A86C8;
}

.ime-zh { font-size: 20px; font-weight: 400; margin-left: -3px; }
.ime-moon { margin-left: -5px; }
.ime-punc { font-size: 18px; }

.zoom-line {
    width: 48px;
    height: 1px;
    background: #AAA;
}

.zoom-plus { margin-left: 3px; font-size: 22px; font-weight: 700; line-height: 20px; width: 16px; text-align: center; }
.zoom-val { margin-left: 16px; width: 34px; }
.st-fit { margin: 0 7px 0 18px; }
```
